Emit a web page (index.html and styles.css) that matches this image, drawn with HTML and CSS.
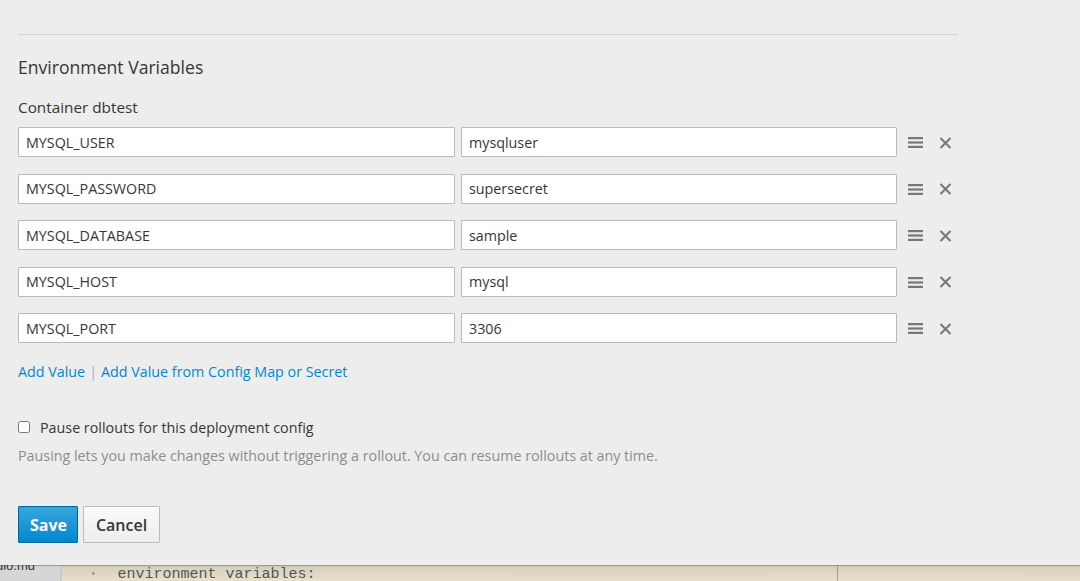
FILE: index.html
```html
<!DOCTYPE html>
<html>
<head>
<meta charset="utf-8">
<link rel="stylesheet" href="styles.css">
</head>
<body>
<div class="panel">
  <div class="content">
    <hr class="divider">
    <h3 class="section-title">Environment Variables</h3>
    <div class="container-label">Container dbtest</div>
    <div class="env-list">
      <div class="env-row">
        <input class="field" type="text" value="MYSQL_USER">
        <input class="field" type="text" value="mysqluser">
        <span class="drag-icon"><svg width="15" height="11" viewBox="0 0 15 11"><rect x="0" y="0" width="15" height="2.2" fill="#777"/><rect x="0" y="4.4" width="15" height="2.2" fill="#777"/><rect x="0" y="8.8" width="15" height="2.2" fill="#777"/></svg></span>
        <span class="remove-icon"><svg width="13" height="12" viewBox="0 0 13 12"><path d="M1.5 1 L11.5 11 M11.5 1 L1.5 11" stroke="#777" stroke-width="2.1"/></svg></span>
      </div>
      <div class="env-row">
        <input class="field" type="text" value="MYSQL_PASSWORD">
        <input class="field" type="text" value="supersecret">
        <span class="drag-icon"><svg width="15" height="11" viewBox="0 0 15 11"><rect x="0" y="0" width="15" height="2.2" fill="#777"/><rect x="0" y="4.4" width="15" height="2.2" fill="#777"/><rect x="0" y="8.8" width="15" height="2.2" fill="#777"/></svg></span>
        <span class="remove-icon"><svg width="13" height="12" viewBox="0 0 13 12"><path d="M1.5 1 L11.5 11 M11.5 1 L1.5 11" stroke="#777" stroke-width="2.1"/></svg></span>
      </div>
      <div class="env-row">
        <input class="field" type="text" value="MYSQL_DATABASE">
        <input class="field" type="text" value="sample">
        <span class="drag-icon"><svg width="15" height="11" viewBox="0 0 15 11"><rect x="0" y="0" width="15" height="2.2" fill="#777"/><rect x="0" y="4.4" width="15" height="2.2" fill="#777"/><rect x="0" y="8.8" width="15" height="2.2" fill="#777"/></svg></span>
        <span class="remove-icon"><svg width="13" height="12" viewBox="0 0 13 12"><path d="M1.5 1 L11.5 11 M11.5 1 L1.5 11" stroke="#777" stroke-width="2.1"/></svg></span>
      </div>
      <div class="env-row">
        <input class="field" type="text" value="MYSQL_HOST">
        <input class="field" type="text" value="mysql">
        <span class="drag-icon"><svg width="15" height="11" viewBox="0 0 15 11"><rect x="0" y="0" width="15" height="2.2" fill="#777"/><rect x="0" y="4.4" width="15" height="2.2" fill="#777"/><rect x="0" y="8.8" width="15" height="2.2" fill="#777"/></svg></span>
        <span class="remove-icon"><svg width="13" height="12" viewBox="0 0 13 12"><path d="M1.5 1 L11.5 11 M11.5 1 L1.5 11" stroke="#777" stroke-width="2.1"/></svg></span>
      </div>
      <div class="env-row">
        <input class="field" type="text" value="MYSQL_PORT">
        <input class="field" type="text" value="3306">
        <span class="drag-icon"><svg width="15" height="11" viewBox="0 0 15 11"><rect x="0" y="0" width="15" height="2.2" fill="#777"/><rect x="0" y="4.4" width="15" height="2.2" fill="#777"/><rect x="0" y="8.8" width="15" height="2.2" fill="#777"/></svg></span>
        <span class="remove-icon"><svg width="13" height="12" viewBox="0 0 13 12"><path d="M1.5 1 L11.5 11 M11.5 1 L1.5 11" stroke="#777" stroke-width="2.1"/></svg></span>
      </div>
    </div>
    <div class="add-links">
      <a class="link" href="#">Add Value</a><span class="sep">|</span><a class="link" href="#">Add Value from Config Map or Secret</a>
    </div>
    <label class="check-row">
      <input class="check" type="checkbox">
      <span>Pause rollouts for this deployment config</span>
    </label>
    <div class="help">Pausing lets you make changes without triggering a rollout. You can resume rollouts at any time.</div>
    <div class="buttons">
      <button class="btn btn-primary">Save</button>
      <button class="btn btn-default">Cancel</button>
    </div>
  </div>
</div>
<div class="editor">
  <div class="sidebar"><span class="file">dio.md</span></div>
  <div class="gutter-gap"></div>
  <div class="code">
    <span class="bullet">•</span><span class="code-text">environment variables:</span>
  </div>
  <div class="code-right"></div>
</div>
</body>
</html>
```

FILE: styles.css
```css
html, body {
  margin: 0;
  padding: 0;
  background: #ededed;
  font-family: "Open Sans", "Liberation Sans", sans-serif;
  font-size: 14.3px;
  color: #363636;
  overflow: hidden;
}

.panel {
  height: 565px;
  box-sizing: border-box;
  background: #ededed;
  position: relative;
  z-index: 2;
  box-shadow: 0 1px 1px rgba(0,0,0,0.25);
}

.content {
  width: 940px;
  margin-left: 18px;
  padding-top: 34px;
}

.divider {
  margin: 0;
  border: 0;
  border-top: 1px solid #d1d1d1;
  height: 0;
}

.section-title {
  margin: 20px 0 0 0;
  font-size: 17.6px;
  line-height: 24px;
  font-weight: 400;
  color: #363636;
}

.container-label {
  margin-top: 18px;
  font-size: 15.3px;
  line-height: 21px;
}

.env-list {
  margin-top: 9px;
  display: flex;
  flex-direction: column;
  gap: 16.5px;
}

.env-row {
  display: flex;
  align-items: center;
  height: 30px;
}

.field {
  box-sizing: border-box;
  width: 437px;
  height: 30px;
  margin: 0 6px 0 0;
  padding: 0 7px;
  border: 1px solid #bbb;
  border-radius: 1px;
  background: #fff;
  font-family: "Open Sans", "Liberation Sans", sans-serif;
  font-size: 14.3px;
  color: #363636;
  outline: none;
}

.field + .field {
  width: 436px;
  margin-right: 0;
}

.drag-icon {
  display: flex;
  margin-left: 11px;
  margin-top: 1px;
}

.remove-icon {
  display: flex;
  margin-left: 16px;
  margin-top: 1px;
}

.add-links {
  margin-top: 19px;
  line-height: 20px;
}

.link {
  color: #0088ce;
  text-decoration: none;
}

.sep {
  color: #9fb4c3;
  margin: 0 4px 0 4px;
}

.check-row {
  display: flex;
  align-items: center;
  margin-top: 36px;
  line-height: 20px;
}

.check {
  margin: 0 10px 0 0;
  width: 12px;
  height: 12px;
  position: relative;
  top: -1px;
}

.help {
  margin-top: 8px;
  line-height: 20px;
  color: #8b8d8f;
}

.buttons {
  margin-top: 40px;
  display: flex;
  gap: 5px;
}

.btn {
  height: 37px;
  box-sizing: border-box;
  border-radius: 1px;
  font-family: "Open Sans", "Liberation Sans", sans-serif;
  font-size: 16px;
  padding: 0 11px;
  cursor: pointer;
}

.btn-primary {
  width: 60px;
  color: #fff;
  font-weight: 700;
  background: linear-gradient(#39a5dc, #0088ce);
  border: 1px solid #00659c;
}

.btn-default {
  width: 77px;
  color: #363636;
  font-weight: 600;
  background: linear-gradient(#fafafa, #ededed);
  border: 1px solid #bbb;
}

.editor {
  height: 16px;
  display: flex;
  overflow: hidden;
  position: relative;
  z-index: 1;
}

.sidebar {
  width: 60px;
  background: #d6d6d8;
  overflow: hidden;
  position: relative;
}

.file {
  display: block;
  margin-top: -6px;
  margin-left: -4px;
  font-family: "Liberation Sans", sans-serif;
  font-size: 13px;
  line-height: 14px;
  color: #3a3a3a;
}

.gutter-gap {
  width: 2px;
  background: #c8c8c8;
}

.code {
  width: 775px;
  background: linear-gradient(#d6ceb8, #e8e0cb);
  border-right: 1px solid #a89f86;
  display: flex;
  align-items: flex-start;
}

.code-right {
  flex: 1;
  background: linear-gradient(#d6ceb8, #e8e0cb);
}

.bullet {
  margin-left: 29px;
  margin-top: 2px;
  font-size: 12px;
  line-height: 14px;
  color: #8f9aa0;
}

.code-text {
  margin-left: 22px;
  margin-top: 1px;
  font-family: "Liberation Mono", monospace;
  font-size: 15px;
  line-height: 18px;
  color: #4a5862;
}
```
